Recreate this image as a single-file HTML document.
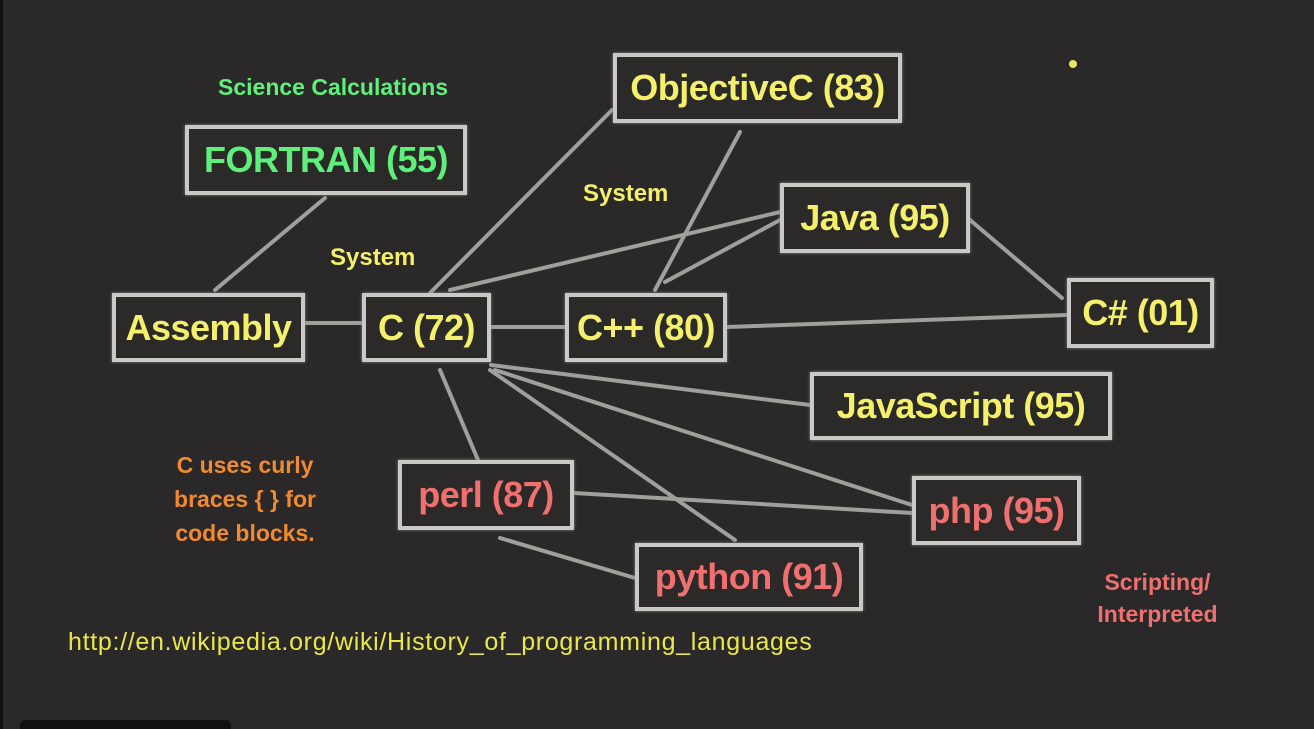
<!DOCTYPE html>
<html><head><style>
html,body{margin:0;width:1314px;height:729px;overflow:hidden}
body{background:#2a2828;position:relative;font-family:"Liberation Sans",sans-serif}
.b{position:absolute;box-sizing:border-box;border:4px solid #c9c9c6;background:#2b2a29;display:flex;align-items:center;justify-content:center;font-weight:bold;font-size:36px;color:#f4f06c;white-space:nowrap;box-shadow:0 0 3px #888;letter-spacing:-0.5px}
.r{color:#f07070}
.g{color:#5ef07a}
.t{position:absolute;font-weight:bold;white-space:nowrap}
svg{position:absolute;left:0;top:0}
</style></head><body>
<svg width="1314" height="729">
<g stroke="#bdbdba" stroke-width="4" stroke-linecap="round" opacity="0.8" fill="none">
<line x1="215" y1="290" x2="325" y2="198"/>
<line x1="305" y1="323" x2="362" y2="323"/>
<line x1="430" y1="293" x2="612" y2="110"/>
<line x1="450" y1="290" x2="780" y2="212"/>
<line x1="491" y1="327" x2="565" y2="327"/>
<line x1="655" y1="290" x2="740" y2="132"/>
<line x1="665" y1="282" x2="780" y2="220"/>
<line x1="727" y1="327" x2="1067" y2="315"/>
<line x1="970" y1="220" x2="1062" y2="298"/>
<line x1="491" y1="365" x2="810" y2="405"/>
<line x1="495" y1="370" x2="912" y2="505"/>
<line x1="490" y1="370" x2="735" y2="540"/>
<line x1="440" y1="370" x2="478" y2="460"/>
<line x1="574" y1="493" x2="912" y2="513"/>
<line x1="500" y1="538" x2="635" y2="578"/>
</g>
<circle cx="1073" cy="64" r="4" fill="#e8e860"/>
</svg>
<div class="t g" style="left:218px;top:74px;font-size:23px">Science Calculations</div>
<div class="b g" style="left:185px;top:125px;width:282px;height:70px;font-size:36px">FORTRAN (55)</div>
<div class="b" style="left:613px;top:53px;width:289px;height:70px">ObjectiveC (83)</div>
<div class="t" style="left:583px;top:180px;font-size:24px;color:#f4f06c">System</div>
<div class="t" style="left:330px;top:244px;font-size:24px;color:#f4f06c">System</div>
<div class="b" style="left:780px;top:183px;width:190px;height:70px">Java (95)</div>
<div class="b" style="left:112px;top:293px;width:193px;height:69px">Assembly</div>
<div class="b" style="left:362px;top:293px;width:129px;height:69px">C (72)</div>
<div class="b" style="left:565px;top:293px;width:162px;height:69px">C++ (80)</div>
<div class="b" style="left:1067px;top:278px;width:147px;height:70px">C# (01)</div>
<div class="b" style="left:810px;top:372px;width:302px;height:68px">JavaScript (95)</div>
<div class="b r" style="left:398px;top:460px;width:176px;height:70px">perl (87)</div>
<div class="b r" style="left:912px;top:476px;width:169px;height:69px">php (95)</div>
<div class="b r" style="left:635px;top:543px;width:228px;height:68px">python (91)</div>
<div class="t" style="left:160px;top:448px;width:170px;text-align:center;font-size:23px;line-height:34px;color:#f08a30">C uses curly<br>braces { } for<br>code blocks.</div>
<div class="t" style="left:1085px;top:566px;width:145px;text-align:center;font-size:23px;line-height:32px;color:#f07070">Scripting/<br>Interpreted</div>
<div class="t" style="left:68px;top:628px;font-size:25px;letter-spacing:0.7px;font-weight:normal;color:#e8e84a">http://en.wikipedia.org/wiki/History_of_programming_languages</div>
<div style="position:absolute;left:20px;top:720px;width:211px;height:9px;background:#111;border-radius:5px 5px 0 0"></div>
<div style="position:absolute;left:0;top:0;width:3px;height:729px;background:#111"></div>
</body></html>
